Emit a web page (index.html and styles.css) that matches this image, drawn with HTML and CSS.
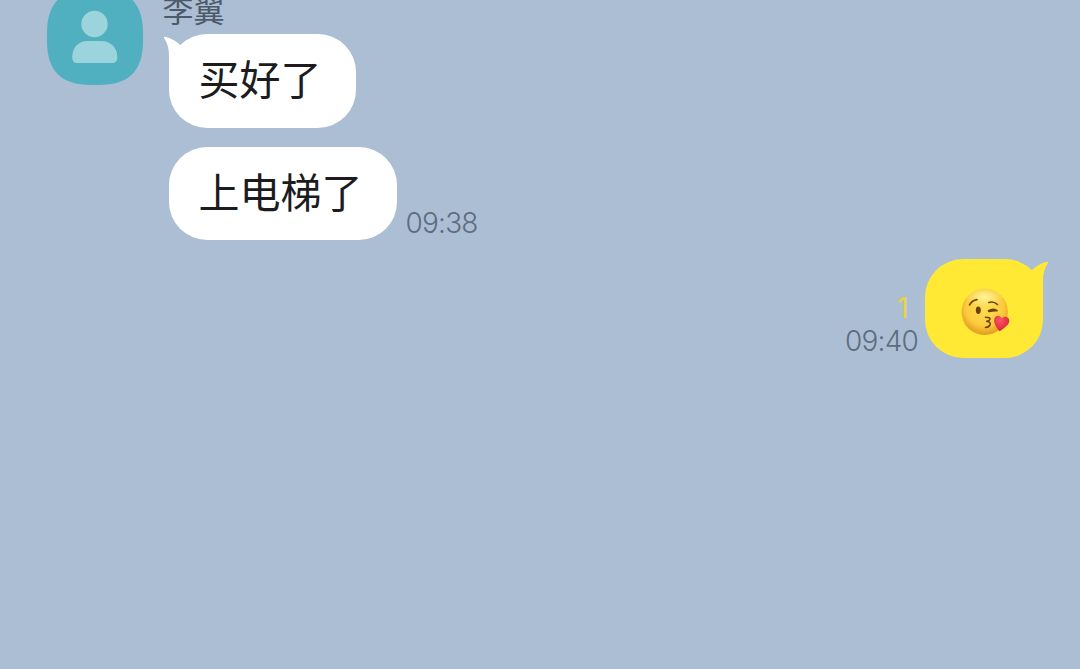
FILE: index.html
```html
<!DOCTYPE html>
<html lang="zh-CN">

<head>
    <meta charset="UTF-8">
    <title>李翼</title>
    <link rel="stylesheet" href="styles.css">
</head>

<body>
    <main class="chat">
        <section class="group">
            <svg class="avatar" viewBox="0 0 96 96">
                <path fill="#50b0bf" d="M44 0H52C82 0 96 14 96 44V52C96 82 82 96 52 96H44C14 96 0 82 0 52V44C0 14 14 0 44 0Z"/>
                <circle cx="47.5" cy="35" r="13.2" fill="#9bd4dc"/>
                <path fill="#9bd4dc" d="M25.2 68C25.2 58 32 52 41 52H54C63 52 70.3 58 70.3 68Q70.3 74 65 74H30Q25.2 74 25.2 68Z"/>
            </svg>
            <div class="messages">
                <div class="name">李翼</div>
                <div class="row">
                    <div class="bubble">
                        <svg class="tail" viewBox="0 0 24 40">
                            <path d="M0.3 2.5Q-1 0 2 1Q10 3 15.5 8.5L24 14V40H5V20Q5 9 0.3 2.5Z"/>
                        </svg>
                        <span class="text">买好了</span>
                    </div>
                </div>
                <div class="row">
                    <div class="bubble"><span class="text">上电梯了</span></div>
                    <div class="meta">
                        <time>09:38</time>
                    </div>
                </div>
            </div>
        </section>

        <section class="row mine">
            <div class="meta">
                <span class="unread">1</span>
                <time>09:40</time>
            </div>
            <div class="bubble">
                <svg class="tail" viewBox="0 0 24 40">
                    <path d="M0.3 2.5Q-1 0 2 1Q10 3 15.5 8.5L24 14V40H5V20Q5 9 0.3 2.5Z"/>
                </svg>
                <svg class="emoji" viewBox="0 0 50 48" role="img" aria-label="😘">
                    <defs>
                        <radialGradient id="face" cx="50%" cy="40%" r="62%">
                            <stop offset="0" stop-color="#ffde55"/>
                            <stop offset=".65" stop-color="#fccb3d"/>
                            <stop offset="1" stop-color="#e0941c"/>
                        </radialGradient>
                        <radialGradient id="shine" cx="50%" cy="45%" r="50%">
                            <stop offset="0" stop-color="#fff8a0" stop-opacity=".9"/>
                            <stop offset="1" stop-color="#fff8a0" stop-opacity="0"/>
                        </radialGradient>
                        <radialGradient id="heart" cx="40%" cy="30%" r="75%">
                            <stop offset="0" stop-color="#fa5661"/>
                            <stop offset="1" stop-color="#d91f38"/>
                        </radialGradient>
                    </defs>
                    <circle cx="23.7" cy="23.8" r="23.2" fill="url(#face)"/>
                    <ellipse cx="23.5" cy="10" rx="19" ry="9.5" fill="url(#shine)"/>
                    <ellipse cx="17.3" cy="22.3" rx="2.5" ry="3.7" fill="#6d4308"/>
                    <g fill="none" stroke="#6d4308" stroke-linecap="round" stroke-linejoin="round">
                        <path stroke-width="1.6" d="M8.5 17Q11 12.3 16 11.6"/>
                        <path stroke-width="1.6" d="M27.8 14.5Q32.5 12.8 36.5 16.5"/>
                        <path stroke-width="1.7" d="M27.5 23Q31.5 19.8 36 22.6M28 23.4Q32 22.3 36 22.6"/>
                        <path stroke-width="1.6" d="M24.5 29.2Q29.5 29.2 29 31.2Q28.5 33 25.8 33.4Q30 34 29.2 36.5Q28.5 39 24.5 39.5"/>
                    </g>
                    <path fill="url(#heart)" d="M38.6 43.2C35 39.5 32.5 34.5 33.2 31.2C34 27 39 26.5 40.8 30.3C43.5 27 48.6 29 48.3 33C48 37 43 40.5 38.6 43.2Z"/>
                </svg>
            </div>
        </section>
    </main>
</body>

</html>
```
FILE: styles.css
```css
* {
    box-sizing: border-box;
}

body {
    margin: 0;
    background-color: #acbed4;
    font-family: "Liberation Sans", "Noto Sans CJK SC", sans-serif;
}

.chat {
    height: 669px;
    padding: 0 37px 0 47px;
    overflow: hidden;
}

.group {
    display: flex;
    align-items: flex-start;
    gap: 25.5px;
    margin-top: -11px;
}

.avatar {
    width: 96px;
    height: 96px;
}

.messages {
    display: flex;
    flex-direction: column;
    gap: 19px;
}

.name {
    height: 26px;
    margin-left: -6px;
    font-family: "Noto Sans CJK SC", sans-serif;
    font-size: 31px;
    font-weight: 400;
    line-height: 40px;
    color: #4c5a69;
}

.row {
    display: flex;
    align-items: flex-end;
    gap: 9px;
}

.bubble {
    position: relative;
    height: 93.5px;
    padding: 0 34px 0 30px;
    border-radius: 38px;
    background-color: #fff;
    color: #1c1c1e;
}

.text {
    display: block;
    font-family: "Noto Sans CJK SC", sans-serif;
    font-size: 41px;
    line-height: 86px;
    white-space: nowrap;
}

/* little ear on the corner of the first bubble */
.tail {
    position: absolute;
    top: 2px;
    left: -5px;
    width: 24px;
    height: 40px;
    fill: #fff;
}

.meta {
    display: flex;
    flex-direction: column;
    align-items: flex-end;
    padding-bottom: 1px;
    font-family: Inter, sans-serif;
    font-size: 28px;
    line-height: 32px;
    letter-spacing: -0.8px;
    font-weight: 350;
    color: #5c6d7f;
}

.unread {
    margin: 0 10px 1px 0;
    font-size: 29px;
    font-weight: 400;
    color: #e6d548;
}

.mine {
    justify-content: flex-end;
    gap: 7px;
    margin-top: 19px;
}

.mine .bubble {
    width: 118px;
    height: 99px;
    padding: 29px 0 0 36px;
    background-color: #ffe935;
}

.mine .tail {
    left: auto;
    right: -5px;
    transform: scaleX(-1);
    fill: #ffe935;
}

.emoji {
    display: block;
    width: 50px;
    height: 48px;
}
```
